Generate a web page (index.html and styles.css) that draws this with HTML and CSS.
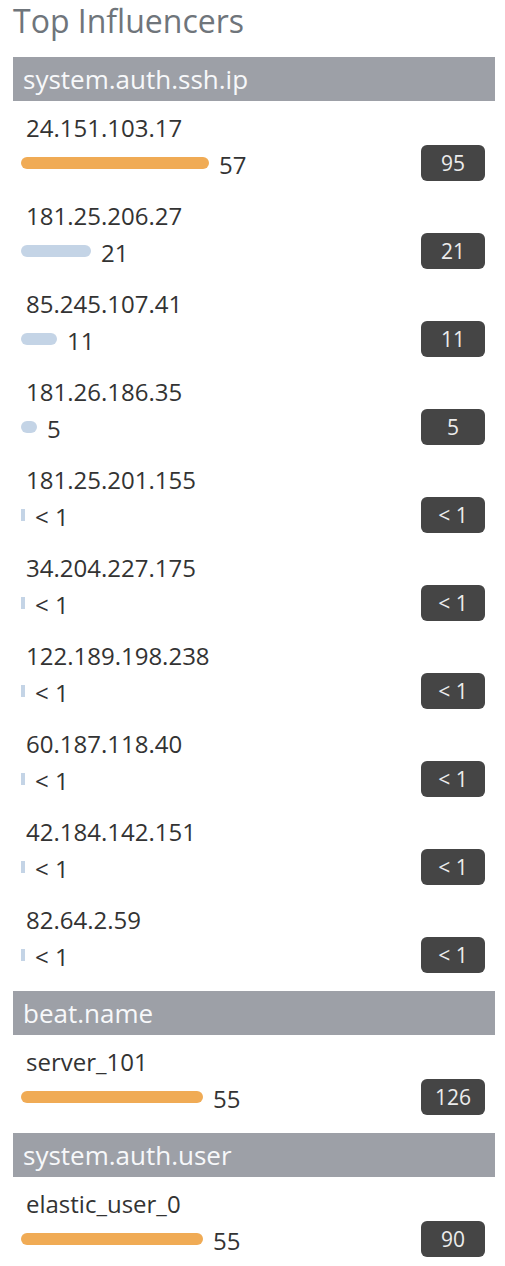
FILE: index.html
```html
<!DOCTYPE html>
<html lang="en">
<head>
<meta charset="utf-8">
<title>Top Influencers</title>
<link rel="stylesheet" href="styles.css">
</head>
<body>
<div class="panel">
  <h2 class="title">Top Influencers</h2>

  <section class="group">
    <div class="group-head">system.auth.ssh.ip</div>
    <div class="row">
      <div class="info">
        <div class="label">24.151.103.17</div>
        <div class="score"><span class="bar bar-major" style="width:188px"></span><span class="val">57</span></div>
      </div>
      <span class="badge">95</span>
    </div>
    <div class="row">
      <div class="info">
        <div class="label">181.25.206.27</div>
        <div class="score"><span class="bar bar-minor" style="width:70px"></span><span class="val">21</span></div>
      </div>
      <span class="badge">21</span>
    </div>
    <div class="row">
      <div class="info">
        <div class="label">85.245.107.41</div>
        <div class="score"><span class="bar bar-minor" style="width:36px"></span><span class="val">11</span></div>
      </div>
      <span class="badge">11</span>
    </div>
    <div class="row">
      <div class="info">
        <div class="label">181.26.186.35</div>
        <div class="score"><span class="bar bar-minor" style="width:16px"></span><span class="val">5</span></div>
      </div>
      <span class="badge">5</span>
    </div>
    <div class="row">
      <div class="info">
        <div class="label">181.25.201.155</div>
        <div class="score"><span class="bar bar-minor bar-tiny"></span><span class="val">&lt; 1</span></div>
      </div>
      <span class="badge">&lt; 1</span>
    </div>
    <div class="row">
      <div class="info">
        <div class="label">34.204.227.175</div>
        <div class="score"><span class="bar bar-minor bar-tiny"></span><span class="val">&lt; 1</span></div>
      </div>
      <span class="badge">&lt; 1</span>
    </div>
    <div class="row">
      <div class="info">
        <div class="label">122.189.198.238</div>
        <div class="score"><span class="bar bar-minor bar-tiny"></span><span class="val">&lt; 1</span></div>
      </div>
      <span class="badge">&lt; 1</span>
    </div>
    <div class="row">
      <div class="info">
        <div class="label">60.187.118.40</div>
        <div class="score"><span class="bar bar-minor bar-tiny"></span><span class="val">&lt; 1</span></div>
      </div>
      <span class="badge">&lt; 1</span>
    </div>
    <div class="row">
      <div class="info">
        <div class="label">42.184.142.151</div>
        <div class="score"><span class="bar bar-minor bar-tiny"></span><span class="val">&lt; 1</span></div>
      </div>
      <span class="badge">&lt; 1</span>
    </div>
    <div class="row">
      <div class="info">
        <div class="label">82.64.2.59</div>
        <div class="score"><span class="bar bar-minor bar-tiny"></span><span class="val">&lt; 1</span></div>
      </div>
      <span class="badge">&lt; 1</span>
    </div>
  </section>

  <section class="group">
    <div class="group-head">beat.name</div>
    <div class="row">
      <div class="info">
        <div class="label">server_101</div>
        <div class="score"><span class="bar bar-major" style="width:182px"></span><span class="val">55</span></div>
      </div>
      <span class="badge">126</span>
    </div>
  </section>

  <section class="group">
    <div class="group-head">system.auth.user</div>
    <div class="row">
      <div class="info">
        <div class="label">elastic_user_0</div>
        <div class="score"><span class="bar bar-major" style="width:182px"></span><span class="val">55</span></div>
      </div>
      <span class="badge">90</span>
    </div>
  </section>
</div>
</body>
</html>
```

FILE: styles.css
```css
* {
  box-sizing: border-box;
}

html, body {
  margin: 0;
  padding: 0;
  background: #ffffff;
}

body {
  font-family: "Open Sans", "Liberation Sans", sans-serif;
  color: #333333;
}

.panel {
  width: 482px;
  margin-left: 13px;
}

.title {
  margin: 0;
  padding: 1px 0 16px;
  font-size: 32px;
  line-height: 40px;
  font-weight: 400;
  color: #6f757b;
}

.group {
  display: flex;
  flex-direction: column;
  margin-bottom: 10px;
}

.group-head {
  height: 44px;
  padding-left: 10px;
  background: #9da0a7;
  color: #f7f8fa;
  font-size: 26px;
  line-height: 44px;
}

.row {
  display: flex;
  align-items: flex-end;
  justify-content: space-between;
  padding: 11px 10px 8px 8px;
}

.info {
  display: flex;
  flex-direction: column;
  gap: 5px;
}

.label {
  padding-left: 5px;
  font-size: 24px;
  line-height: 32px;
  color: #333333;
}

.score {
  display: flex;
  align-items: flex-start;
  gap: 10px;
  height: 32px;
  font-size: 24px;
  line-height: 32px;
}

.bar {
  display: block;
  height: 12px;
  margin-top: 8px;
  border-radius: 6px;
}

.bar-major {
  background: #f0ab55;
}

.bar-minor {
  background: #c4d4e6;
}

.bar-tiny {
  width: 4px;
  border-radius: 0;
}

.val {
  color: #333333;
}

.badge {
  display: flex;
  align-items: center;
  justify-content: center;
  width: 64px;
  height: 36px;
  border-radius: 6px;
  background: #454545;
  color: #ececec;
  font-size: 21px;
  line-height: 36px;
}
```
